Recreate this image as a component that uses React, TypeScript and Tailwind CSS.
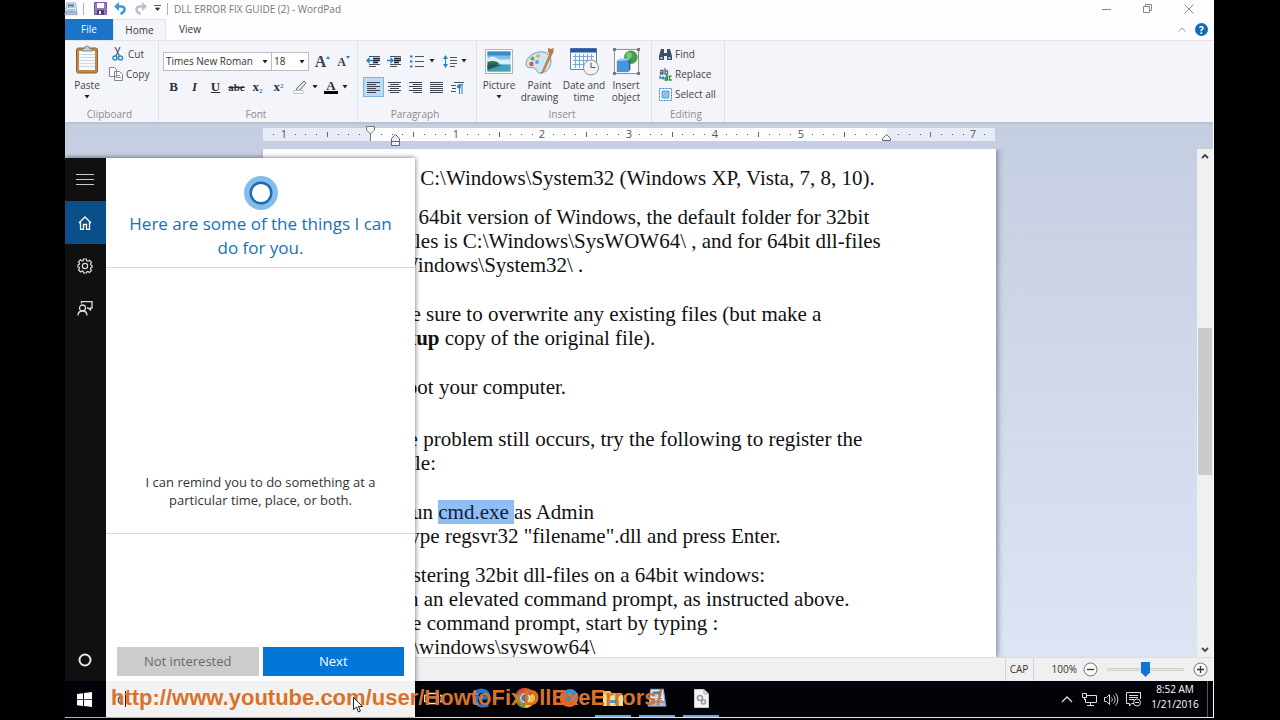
import type { ReactNode } from "react";

const Caret = () => (
  <svg width="6" height="4" viewBox="0 0 6 4" className="shrink-0">
    <path d="M.5 0h5L3 3.500z" fill="#222" />
  </svg>
);

const WordPadIcon = ({ size }: { size: number }) => (
  <svg width={size} height={size} viewBox="0 0 16 16" className="shrink-0">
    <path d="M3 1h10l1.500 10H2z" fill="#e9f2fb" stroke="#8aa5c4" strokeWidth="1" />
    <path d="M4.500 2.500h7l.5 4H4.200z" fill="#4d86c8" />
    <path d="M4.500 6.500l3-2 2 1 2.500-1 .2 2z" fill="#b8d9ef" />
    <path d="M3.500 8.500h9M3.300 10h9.400" stroke="#8ba6c4" strokeWidth=".8" />
    <path d="M1.500 11.500h13l.7 3H.8z" fill="#b5c5da" stroke="#7f95b0" strokeWidth=".8" />
  </svg>
);

/* ---------- Title bar ---------- */

function TitleBar() {
  return (
    <header className="flex h-[19px] shrink-0 items-center pb-0.5">
      <div className="flex flex-1 items-center">
        <span className="-ml-px flex w-[17px]">
          <WordPadIcon size={14} />
        </span>
        <span className="ml-0.5 h-3 w-px bg-[#b0b0b0]" />
        <button aria-label="Save" className="ml-2.5">
          <svg width="13" height="13" viewBox="0 0 13 13" className="block">
            <path d="M.5.5h12v12H.5z" fill="#9a76c0" stroke="#7b5aa3" />
            <path d="M3 1h7v5H3z" fill="#fff" />
            <path d="M3 8h7v4.500H3z" fill="#4b3f66" />
            <path d="M5 9h2v3H5z" fill="#eee" />
          </svg>
        </button>
        <button aria-label="Undo" className="ml-[7px]">
          <svg width="13" height="13" viewBox="0 0 13 13" className="block">
            <path d="M2 4.500h5.500c4 0 4.500 5-1 7.500" fill="none" stroke="#3a9bd9" strokeWidth="2.600" />
            <path d="M0 4.500L5 0v9z" fill="#3a9bd9" />
          </svg>
        </button>
        <button aria-label="Redo" className="ml-[7px]">
          <svg width="13" height="13" viewBox="0 0 13 13" className="block">
            <path d="M11 4.500H5.500c-4 0-4.500 5 1 7.500" fill="none" stroke="#b9c3cd" strokeWidth="2.600" />
            <path d="M13 4.500L8 0v9z" fill="#b9c3cd" />
          </svg>
        </button>
        <button aria-label="Customize toolbar" className="ml-[7px]">
          <svg width="7" height="7" viewBox="0 0 7 7" className="block">
            <path d="M0 .5h7M1.500 3h4L3.500 5.500z" fill="#333" stroke="#333" strokeWidth=".8" />
          </svg>
        </button>
        <span className="ml-1.5 h-3 w-px bg-[#b0b0b0]" />
        <h1 className="ml-1.5 text-[10px] leading-4 whitespace-nowrap text-[#777]">DLL ERROR FIX GUIDE (2) - WordPad</h1>
      </div>
      <div className="flex items-center">
        <button aria-label="Minimize" className="flex w-[41px] justify-center">
          <svg width="10" height="10" viewBox="0 0 10 10">
            <path d="M0 5.500h9" stroke="#888" />
          </svg>
        </button>
        <button aria-label="Restore" className="flex w-[41px] justify-center">
          <svg width="10" height="10" viewBox="0 0 10 10" fill="none" stroke="#888">
            <path d="M.5 2.500h6v6h-6zM2.500 2.500v-2h6v6h-2" />
          </svg>
        </button>
        <button aria-label="Close" className="flex w-[41px] justify-center">
          <svg width="10" height="10" viewBox="0 0 10 10">
            <path d="M.5.5l9 9M9.500.5l-9 9" stroke="#888" />
          </svg>
        </button>
        <span className="w-1" />
      </div>
    </header>
  );
}

function Tabs() {
  return (
    <nav className="flex h-[21px] shrink-0 text-[10px]">
      <button className="w-12 bg-[#1a74c7] text-white">File</button>
      <button className="w-[53px] border-x border-t border-[#dfe2e8] bg-[#f4f5fa] text-[#333]">Home</button>
      <button className="w-12 text-[#333]">View</button>
      <div className="flex flex-1 items-center justify-end gap-[9px] pr-[5px]">
        <button aria-label="Collapse ribbon">
          <svg width="8" height="5" viewBox="0 0 8 5" className="block">
            <path d="M.5 4.500L4 1l3.500 3.500" fill="none" stroke="#999" />
          </svg>
        </button>
        <button aria-label="Help" className="flex size-[13px] items-center justify-center rounded-full bg-[#0f6cb8] text-[10px] leading-none font-bold text-white">
          ?
        </button>
      </div>
    </nav>
  );
}

/* ---------- Ribbon ---------- */

function Group({ label, width, children }: { label: string; width: string; children: ReactNode }) {
  return (
    <section aria-label={label} className={`flex shrink-0 flex-col border-r border-[#dfe3ea] ${width}`}>
      <div className="flex-1">{children}</div>
      <div className="h-4 pr-1 text-center leading-4 text-[#8b8b8b]">{label}</div>
    </section>
  );
}

function Tool({ label, active, children }: { label: string; active?: boolean; children: ReactNode }) {
  return (
    <button
      aria-label={label}
      className={
        active
          ? "flex h-5 w-[21px] items-center justify-center border border-[#7fb2e5] bg-[#bcdcf6]"
          : "flex h-5 w-[21px] items-center justify-center"
      }
    >
      {children}
    </button>
  );
}

const Lines = ({ d }: { d: string }) => (
  <svg width="13" height="13" viewBox="0 0 13 13">
    <path d={d} stroke="#3c4250" strokeWidth="1" fill="none" />
  </svg>
);

const IndentIcon = ({ right }: { right?: boolean }) => (
  <svg width="15" height="13" viewBox="0 0 15 13">
    <path d="M3 1.500h11M3 9.500h11M3 11.500h7" stroke="#4a5160" />
    <path d="M7 3.500h7M7 5.500h7M7 7.500h5" stroke="#1d222c" strokeWidth="1.500" />
    <path d={right ? "M0 5.500h5" : "M2 5.500h5"} stroke="#2a80c0" strokeWidth="1.500" />
    <path d={right ? "M3.500 2l3.500 3.500L3.500 9z" : "M3.500 2L0 5.500 3.500 9z"} fill="#2a80c0" />
  </svg>
);

function BigTool({ lines, width, caret, children }: { lines: string[]; width: string; caret?: boolean; children: ReactNode }) {
  return (
    <button className={`flex flex-col items-center pt-1 leading-3 text-[#444] ${width}`}>
      <span className="flex h-[34px] items-center pb-0.5">{children}</span>
      {lines.map((line) => (
        <span key={line} className="whitespace-nowrap">
          {line}
        </span>
      ))}
      {caret && (
        <span className="flex pt-1">
          <Caret />
        </span>
      )}
    </button>
  );
}

const ClipboardIcon = () => (
  <svg width="24" height="29" viewBox="0 0 24 29">
    <rect x="1.500" y="3" width="21" height="25" rx="2" fill="#c08a45" stroke="#8e6128" />
    <path d="M4 6h16v19H4z" fill="#f7fafd" />
    <path d="M4 9.500h16M4 12.500h16M4 15.500h16M4 18.500h16M4 21.500h16" stroke="#cfd9e4" />
    <path d="M7 6V3.500h2.500a2.500 2.500 0 015 0H17V6z" fill="#c9ced5" stroke="#6b7078" strokeWidth=".8" />
  </svg>
);

const PictureIcon = () => (
  <svg width="28" height="25" viewBox="0 0 28 25">
    <path d="M.5.5h27v24H.5z" fill="#fff" stroke="#b3b3b3" />
    <path d="M2.500 2.500h23v20h-23z" fill="#7cc0ea" />
    <path d="M2.500 2.500h23v4h-23z" fill="#3a89c9" />
    <path d="M2.500 10c4-4 8-2 11 0s7-1 12 1v4h-23z" fill="#d9eff8" />
    <path d="M2.500 13c4-1 8-2 12 2l-12 3z" fill="#2f6b4d" />
    <path d="M2.500 16h23v6.500h-23z" fill="#3fa3b5" />
    <path d="M2.500 16c5-1 10-1 14 0l-14 5z" fill="#1f5a56" />
  </svg>
);

const PaintIcon = () => (
  <svg width="30" height="28" viewBox="0 0 30 28">
    <path d="M14 5c8-1 12 3 12 9 0 7-5 12-11 12-4 0-3-4-6-5s-8 1-8-4C1 11 7 6 14 5z" fill="#cfe5f4" stroke="#6d9dc4" />
    <circle cx="6.500" cy="17" r="2.200" fill="#e0533f" />
    <circle cx="7.500" cy="11.500" r="2" fill="#6fb04a" />
    <circle cx="13" cy="9" r="2" fill="#e9b53d" />
    <circle cx="12" cy="15" r="2" fill="#5aa7df" />
    <path d="M26 4L17 25l-1 2 3-3L28 5z" fill="#d98b3a" stroke="#a5622a" strokeWidth=".6" />
    <path d="M23 1l3 1 3-1-1 5-3 2-2-3z" fill="#b97b45" />
  </svg>
);

const CalendarIcon = () => (
  <svg width="30" height="29" viewBox="0 0 30 29">
    <path d="M1.500 1.500h26v21h-26z" fill="#f4f9fe" stroke="#5e87b4" />
    <path d="M1.500 1.500h26v4h-26z" fill="#2a579c" />
    <path d="M4 9.500h21M4 13.500h21M4 17.500h21M6.500 7v14M10.500 7v14M14.500 7v14M18.500 7v14M22.500 7v14" stroke="#7ea7d8" />
    <circle cx="22" cy="20.500" r="7.500" fill="#f1f3f5" stroke="#8d9298" />
    <path d="M22 15.500v5h4.500" stroke="#4c5560" fill="none" />
  </svg>
);

const ObjectIcon = () => (
  <svg width="27" height="27" viewBox="0 0 28 28">
    <path d="M1.500 1.500h25v25h-25z" fill="#fafafa" stroke="#888" />
    <path d="M0 0h3v3H0zM25 0h3v3h-3zM0 25h3v3H0zM25 25h3v3h-3z" fill="#777" />
    <circle cx="18.500" cy="9.500" r="7" fill="#3fa04a" />
    <circle cx="16.500" cy="7.500" r="3" fill="#7cc878" />
    <path d="M4 13l3-2h11l-2 2z" fill="#9ccbf5" />
    <path d="M4 13h12v12H4z" fill="#4a92e2" />
    <path d="M16 13l2-2v11l-2 3z" fill="#2460ad" />
  </svg>
);

const combo = "h-full w-full appearance-none border border-[#b9bfc9] bg-white pl-0.5 text-[#333] outline-none";

function Ribbon() {
  return (
    <div className="flex h-[82px] shrink-0 border-t border-[#e1e4ea] bg-[#f4f5fa] text-[10px] text-[#444]">
      <Group label="Clipboard" width="w-[94px]">
        <div className="flex">
          <button className="flex w-11 flex-col items-center pt-1 leading-3">
            <ClipboardIcon />
            <span className="pt-[5px]">Paste</span>
            <span className="flex pt-1">
              <Caret />
            </span>
          </button>
          <div className="flex flex-col pt-[3px]">
            <button className="flex h-5 items-center gap-1 pl-[3px]">
              <svg width="12" height="14" viewBox="0 0 12 14">
                <path d="M3 0l4.500 9M8 0L4 9" stroke="#5b6878" strokeWidth="1.300" />
                <circle cx="3" cy="11" r="2" fill="none" stroke="#2e86c8" strokeWidth="1.500" />
                <circle cx="8.500" cy="11" r="2" fill="none" stroke="#2e86c8" strokeWidth="1.500" />
              </svg>
              Cut
            </button>
            <button className="flex h-5 items-center gap-[3px]">
              <svg width="14" height="14" viewBox="0 0 14 14" fill="#fff" stroke="#7c8794">
                <path d="M.5.500h5l2 2v7h-7zM5.500 4.500h5l3 3v6h-8z" />
                <path d="M7 8.500h4M7 10.500h5" stroke="#6aa2d4" />
              </svg>
              Copy
            </button>
          </div>
        </div>
      </Group>

      <Group label="Font" width="w-[199px]">
        <div className="mt-[11px] flex h-[19px] pl-1">
          <div className="relative w-[109px]">
            <select aria-label="Font family" className={combo}>
              <option>Times New Roman</option>
            </select>
            <span className="pointer-events-none absolute top-2 right-1 flex">
              <Caret />
            </span>
          </div>
          <div className="relative -ml-px w-[38px]">
            <select aria-label="Font size" className={combo}>
              <option>18</option>
            </select>
            <span className="pointer-events-none absolute top-2 right-1 flex">
              <Caret />
            </span>
          </div>
          <div className="flex items-center pl-[3px] font-['Liberation_Serif',serif] font-bold text-[#3a4150]">
            <Tool label="Grow font">
              <span className="text-base">A</span>
              <svg width="4" height="12" viewBox="0 0 4 12">
                <path d="M0 3l2-3 2 3z" fill="#2a80c0" />
              </svg>
            </Tool>
            <Tool label="Shrink font">
              <span className="text-xs">A</span>
              <svg width="4" height="12" viewBox="0 0 4 12">
                <path d="M0 0h4L2 3z" fill="#2a80c0" />
              </svg>
            </Tool>
          </div>
        </div>
        <div className="mt-1.5 flex items-center pl-1 font-['Liberation_Serif',serif] text-[13px] font-bold text-[#2c313c]">
          <Tool label="Bold">B</Tool>
          <Tool label="Italic">
            <i>I</i>
          </Tool>
          <Tool label="Underline">
            <u>U</u>
          </Tool>
          <Tool label="Strikethrough">
            <s className="text-[11px]">abc</s>
          </Tool>
          <Tool label="Subscript">
            <span>
              x<sub className="text-[7px] text-[#2a80c0]">2</sub>
            </span>
          </Tool>
          <Tool label="Superscript">
            <span>
              x<sup className="text-[7px] text-[#2a80c0]">2</sup>
            </span>
          </Tool>
          <button aria-label="Text highlight color" className="flex h-5 w-[33px] items-center justify-center gap-1">
            <svg width="15" height="14" viewBox="0 0 15 14">
              <path d="M4 8l7-7 2 2-6 7-4 1z" fill="#dfe5ec" stroke="#66707e" />
              <path d="M1 10.500h9v3H1z" fill="#fff" stroke="#aaa" strokeWidth=".7" />
            </svg>
            <Caret />
          </button>
          <button aria-label="Text color" className="flex h-5 w-7 items-center justify-center gap-1">
            <span className="border-b-[3px] border-black px-0.5 leading-[11px]">A</span>
            <Caret />
          </button>
        </div>
      </Group>

      <Group label="Paragraph" width="w-[119px]">
        <div className="mt-2.5 flex items-center pl-[5px]">
          <Tool label="Decrease indent">
            <IndentIcon />
          </Tool>
          <Tool label="Increase indent">
            <IndentIcon right />
          </Tool>
          <button aria-label="Start a list" className="flex h-5 w-[34px] items-center justify-center gap-[5px]">
            <svg width="14" height="13" viewBox="0 0 14 13">
              <path d="M0 1.500h2.500M0 6.500h2.500M0 11.500h2.500" stroke="#2a80c0" strokeWidth="2" />
              <path d="M5 1.500h9M5 6.500h9M5 11.500h9" stroke="#4a5160" />
            </svg>
            <Caret />
          </button>
          <button aria-label="Line spacing" className="flex h-5 w-7 items-center justify-center gap-1 pl-1">
            <svg width="14" height="13" viewBox="0 0 14 13" className="shrink-0">
              <path d="M2.500 2v9" stroke="#2a80c0" />
              <path d="M0 4l2.500-4L5 4zM0 9l2.500 4L5 9z" fill="#2a80c0" />
              <path d="M7 2.500h7M7 5.500h7M7 8.500h7M7 11.500h5" stroke="#4a5160" />
            </svg>
            <Caret />
          </button>
        </div>
        <div className="mt-1.5 flex items-center pl-[5px]">
          <Tool label="Align left" active>
            <Lines d="M0 1.500h13M0 3.500h9M0 5.500h13M0 7.500h9M0 9.500h13M0 11.500h9" />
          </Tool>
          <Tool label="Center">
            <Lines d="M0 1.500h13M2 3.500h9M0 5.500h13M2 7.500h9M0 9.500h13M2 11.500h9" />
          </Tool>
          <Tool label="Align right">
            <Lines d="M0 1.500h13M4 3.500h9M0 5.500h13M4 7.500h9M0 9.500h13M4 11.500h9" />
          </Tool>
          <Tool label="Justify">
            <Lines d="M0 1.500h13M0 3.500h13M0 5.500h13M0 7.500h13M0 9.500h13M0 11.500h13" />
          </Tool>
          <Tool label="Paragraph">
            <svg width="13" height="13" viewBox="0 0 13 13">
              <path d="M3 1.500h10M0 4.500h5M1 7.500h4M0 10.500h5" stroke="#4a5160" />
              <path d="M8.500 3v10M11 3v10M12 3.500H8" stroke="#2a80c0" />
              <circle cx="8" cy="5.500" r="2" fill="#2a80c0" />
            </svg>
          </Tool>
        </div>
      </Group>

      <Group label="Insert" width="w-[175px]">
        <div className="flex pl-[3px]">
          <BigTool lines={["Picture"]} width="w-[38px]" caret>
            <PictureIcon />
          </BigTool>
          <BigTool lines={["Paint", "drawing"]} width="w-[43px]">
            <PaintIcon />
          </BigTool>
          <BigTool lines={["Date and", "time"]} width="w-[46px]">
            <CalendarIcon />
          </BigTool>
          <BigTool lines={["Insert", "object"]} width="w-[38px]">
            <ObjectIcon />
          </BigTool>
        </div>
      </Group>

      <Group label="Editing" width="w-[73px]">
        <div className="flex flex-col pt-[3px] pl-[7px]">
          <button className="flex h-5 items-center gap-[3px]">
            <svg width="13" height="12" viewBox="0 0 13 12">
              <path d="M2 1h3v4h3V1h3l2 7v4H8V8H5v4H0V8z" fill="#3f4f66" />
              <path d="M1.500 9h2v2h-2zM9.500 9h2v2h-2z" fill="#b9d2ea" />
            </svg>
            Find
          </button>
          <button className="flex h-5 items-center gap-[3px]">
            <svg width="13" height="13" viewBox="0 0 13 13">
              <g fill="none" strokeWidth="1.300">
                <path d="M1 2.500h3V6H1.500V4.300H4M6 0v6h2.500V3H6" stroke="#5f6873" />
                <path d="M6.500 8h2v4H6.200v-2h2.300M12.800 8.200h-2.300v3.800h2.300" stroke="#2f8a3c" />
                <path d="M1 7.500v2.500h4" stroke="#2a80c0" />
              </g>
              <path d="M3.500 7.800l2.500 2.200-2.500 2.200z" fill="#2a80c0" />
            </svg>
            Replace
          </button>
          <button className="flex h-5 items-center gap-[3px] whitespace-nowrap">
            <svg width="13" height="13" viewBox="0 0 13 13">
              <path d="M.5.500h12v12H.5z" fill="#fff" stroke="#3b7fc0" strokeDasharray="2 1" />
              <path d="M3 3h7v7H3z" fill="#8cc3ee" stroke="#5b9ed4" />
            </svg>
            Select all
          </button>
        </div>
      </Group>
    </div>
  );
}

/* ---------- Ruler and document ---------- */

const RULER_ORIGIN = 107;
const INCH = 86.2;

function Ruler() {
  const marks: ReactNode[] = [];
  for (let eighth = -9; eighth <= 57; eighth++) {
    const x = Math.round(RULER_ORIGIN + (eighth * INCH) / 8);
    if (eighth % 8 === 0) {
      const inch = Math.abs(eighth / 8);
      if (inch !== 0 && inch !== 6) {
        marks.push(
          <text key={eighth} x={x} y="10" textAnchor="middle" fontSize="11" fill="#555">
            {inch}
          </text>,
        );
      }
    } else if (eighth % 4 === 0) {
      marks.push(<path key={eighth} d={`M${x + 0.5} 4v5`} stroke="#666" />);
    } else {
      marks.push(<path key={eighth} d={`M${x} 6.500h1`} stroke="#555" />);
    }
  }
  return (
    <svg width="732" height="25" viewBox="0 -4 732 25" className="block shrink-0" role="img" aria-label="Ruler">
      <path d="M0 0h732v13H0z" fill="#e6ebf5" />
      <path d="M107 0h517v13H107z" fill="#fdfdff" />
      {marks}
      <path d="M107.500 5v8" stroke="#777" />
      <path d="M103.500-1.500h8v3.500l-4 4-4-4z" fill="#f5f5f5" stroke="#777" />
      <path d="M128.500 13.500v-3l4-4 4 4v3zM128.500 13.500h8v4h-8z" fill="#eef" stroke="#666" />
      <path d="M619.500 12.500v-2l4-4 4 4v2z" fill="#f5f5f5" stroke="#666" />
    </svg>
  );
}

function DocumentPage() {
  return (
    <article className="h-full w-[733px] shrink-0 overflow-hidden bg-white pt-[17px] pl-[110px] font-['Liberation_Serif',serif] text-[21px] leading-6 whitespace-nowrap text-[#111] shadow-[2px_0_5px_rgba(60,70,100,0.5)]">
      <p>path: C:\Windows\System32 (Windows XP, Vista, 7, 8, 10).</p>
      <p className="mt-[15px]">
        On a 64bit version of Windows, the default folder for 32bit
        <br />
        dll-files is C:\Windows\SysWOW64\ , and for 64bit dll-files
        <br />
        C:\Windows\System32\ .
      </p>
      <p className="mt-[25px]">
        Make sure to overwrite any existing files (but make a
        <br />
        <b>backup</b> copy of the original file).
      </p>
      <p className="mt-[25px]">Reboot your computer.</p>
      <p className="mt-7">
        If the problem still occurs, try the following to register the
        <br />
        dll-file:
      </p>
      <ul className="mt-[25px] pl-[25px]">
        <li>
          Run <mark className="bg-[#8fbef5] text-[#10203c]">cmd.exe </mark>as Admin
        </li>
        <li>Type regsvr32 "filename".dll and press Enter.</li>
      </ul>
      <p className="mt-[15px]">
        Registering 32bit dll-files on a 64bit windows:
        <br />
        From an elevated command prompt, as instructed above.
        <br />
        In the command prompt, start by typing :
        <br />
        cd c:\windows\syswow64\
      </p>
    </article>
  );
}

function ScrollBar() {
  return (
    <div className="flex w-4 shrink-0 flex-col items-center justify-between bg-[#f0f0f2] py-1">
      <svg width="8" height="6" viewBox="0 0 8 6">
        <path d="M1 5l3-3 3 3" fill="none" stroke="#444" strokeWidth="1.800" />
      </svg>
      <div className="flex w-full flex-1 flex-col">
        <span className="grow-[169]" />
        <span className="mx-px grow-[148] bg-[#cacbcb]" />
        <span className="grow-[172]" />
      </div>
      <svg width="8" height="6" viewBox="0 0 8 6">
        <path d="M1 1l3 3 3-3" fill="none" stroke="#444" strokeWidth="1.800" />
      </svg>
    </div>
  );
}

function Workspace() {
  return (
    <main className="flex min-h-0 flex-1 flex-col border-t-2 border-[#b9c3d8] bg-linear-to-b from-[#c5cde0] to-[#dde4f4]">
      <div className="flex h-[25px] shrink-0 items-start pl-[198px]">
        <Ruler />
      </div>
      <div className="flex min-h-0 flex-1 justify-between">
        <div className="flex min-w-0 overflow-hidden pr-3 pl-[198px]">
          <DocumentPage />
        </div>
        <ScrollBar />
      </div>
    </main>
  );
}

function StatusBar() {
  return (
    <footer className="flex h-6 shrink-0 items-center justify-end border-t border-[#dcdcdc] bg-[#f0f0f0] pr-[5px] text-[10px] text-[#333]">
      <span className="flex h-full w-[29px] items-center justify-center border-x border-[#d5d5d5]">CAP</span>
      <label htmlFor="zoom" className="ml-[18px]">
        100%
      </label>
      <button aria-label="Zoom out" className="ml-1.5 flex">
        <svg width="15" height="15" viewBox="0 0 15 15">
          <circle cx="7.500" cy="7.500" r="6.500" fill="#fafafa" stroke="#777" />
          <path d="M4 7.500h7" stroke="#333" strokeWidth="1.300" />
        </svg>
      </button>
      <input
        id="zoom"
        type="range"
        defaultValue={50}
        className="mx-[9px] h-4 w-[77px] appearance-none bg-transparent [&::-webkit-slider-runnable-track]:h-[3px] [&::-webkit-slider-runnable-track]:border [&::-webkit-slider-runnable-track]:border-[#d2d2d2] [&::-webkit-slider-runnable-track]:bg-[#e6e6e6] [&::-webkit-slider-thumb]:-mt-[7px] [&::-webkit-slider-thumb]:h-[15px] [&::-webkit-slider-thumb]:w-[9px] [&::-webkit-slider-thumb]:appearance-none [&::-webkit-slider-thumb]:bg-[#0f74d4] [&::-webkit-slider-thumb]:[clip-path:polygon(0_0,100%_0,100%_70%,50%_100%,0_70%)]"
      />
      <button aria-label="Zoom in" className="flex">
        <svg width="15" height="15" viewBox="0 0 15 15">
          <circle cx="7.500" cy="7.500" r="6.500" fill="#fafafa" stroke="#777" />
          <path d="M4 7.500h7M7.500 4v7" stroke="#333" strokeWidth="1.300" />
        </svg>
      </button>
    </footer>
  );
}

/* ---------- Taskbar ---------- */

function TaskButton({ label, running, children }: { label: string; running?: boolean; children: ReactNode }) {
  return (
    <button aria-label={label} className="flex h-full w-11 flex-col items-center">
      <span className="flex flex-1 items-center">{children}</span>
      <span className={running ? "h-0.5 w-9 bg-[#76a3d8]" : "h-0.5 w-9"} />
    </button>
  );
}

function Taskbar() {
  return (
    <div className="flex h-9 shrink-0 items-stretch bg-[#020308] text-white">
      <div className="flex flex-1 pl-[346px]">
        <TaskButton label="Task view">
          <svg width="18" height="13" viewBox="0 0 18 13" fill="none" stroke="#e8e8e8" strokeWidth="1.300">
            <path d="M4 1.500h10v10H4zM2 3.500H.7v6H2M16 3.500h1.300v6H16" />
          </svg>
        </TaskButton>
        <span className="w-1" />
        <TaskButton label="Edge">
          <svg width="20" height="20" viewBox="0 0 20 20">
            <path d="M1 10C1 4 5 .5 10.500.5 16 .5 19 4 19 9v2.500H7c0 6 6 6 10.500 3.500v3.500C10 21 3.500 19 3.500 12c0-3 1.500-5 4-6.500C4 6 2 8 1 10zm6.500-2h6c0-4-5.500-4-6 0z" fill="#1f78d1" />
          </svg>
        </TaskButton>
        <TaskButton label="Chrome">
          <svg width="20" height="20" viewBox="0 0 20 20">
            <path d="M10 10L1.300 5A10 10 0 0118.700 5z" fill="#e04a3a" />
            <path d="M10 10l8.700-5A10 10 0 0110 20z" fill="#f4c430" />
            <path d="M10 10v10A10 10 0 011.300 5z" fill="#3fa450" />
            <circle cx="10" cy="10" r="4.800" fill="#fff" />
            <circle cx="10" cy="10" r="3.800" fill="#3f7fe0" />
          </svg>
        </TaskButton>
        <TaskButton label="Firefox">
          <svg width="20" height="20" viewBox="0 0 20 20">
            <circle cx="11" cy="9" r="8" fill="#3b8fd0" />
            <path d="M3 3c-3 5-3 10 0 13 5 5 14 4 16-4 1-3 0-6-1-7 0 5-2 9-6 9s-6-2-5-5l3-1-3-2c-2 0-3-1-4-3z" fill="#e8622c" />
          </svg>
        </TaskButton>
        <TaskButton label="File Explorer" running>
          <svg width="20" height="17" viewBox="0 0 20 17">
            <path d="M0 1h7l2 2h10v13H0z" fill="#e8c25a" />
            <path d="M0 5h20v11H0z" fill="#f8df8e" />
            <path d="M4 10h12v6h-3v-3H7v3H4z" fill="#3fa0d8" />
          </svg>
        </TaskButton>
        <TaskButton label="WordPad" running>
          <WordPadIcon size={20} />
        </TaskButton>
        <TaskButton label="Configuration file" running>
          <svg width="15" height="19" viewBox="0 0 15 19">
            <path d="M.5.500h9.500l4.500 4.500v13.500H.5z" fill="#f4f4f4" stroke="#ccc" />
            <path d="M10 .5V5h4.500" fill="none" stroke="#aaa" />
            <circle cx="6" cy="9" r="2.500" fill="none" stroke="#9a9a9a" strokeWidth="1.600" />
            <circle cx="9.500" cy="13" r="2" fill="none" stroke="#9a9a9a" strokeWidth="1.600" />
          </svg>
        </TaskButton>
      </div>
      <div className="flex items-center gap-[7px]">
        <button aria-label="Show hidden icons">
          <svg width="12" height="7" viewBox="0 0 12 7" className="block">
            <path d="M1 6l5-5 5 5" fill="none" stroke="#ddd" strokeWidth="1.300" />
          </svg>
        </button>
        <button aria-label="Network" className="ml-0.5">
          <svg width="15" height="13" viewBox="0 0 15 13" fill="none" stroke="#ddd" className="block">
            <path d="M5 2.500h9.500v7h-11V6M8.500 9.500v3M5 12.500h7M.5.500h4v4h-4zM2.500 4.500V7" />
          </svg>
        </button>
        <button aria-label="Volume">
          <svg width="15" height="13" viewBox="0 0 15 13" fill="none" stroke="#ddd" className="block">
            <path d="M.5 4.500h2l3-3v10l-3-3h-2zM7.500 4.500c1 1 1 3 0 4M9.500 2.500c2 2 2 6 0 8M11.500.5c3 3 3 9 0 12" />
          </svg>
        </button>
        <button aria-label="Notifications">
          <svg width="15" height="15" viewBox="0 0 15 15" fill="none" stroke="#ddd" className="block">
            <path d="M8 11.500H5.500L3.500 14v-2.500H.5V.5h14V7M3 3.500h9M3 5.500h9M3 7.500h5" />
            <circle cx="11" cy="10.500" r="3.500" />
            <path d="M9 10.500h4" />
          </svg>
        </button>
      </div>
      <div className="ml-2 flex w-[52px] flex-col justify-center pb-1 text-center text-[10px] leading-[15px] whitespace-nowrap">
        <span>8:52 AM</span>
        <span>1/21/2016</span>
      </div>
      <button aria-label="Show desktop" className="ml-1.5 w-1.5 border-l border-[#555]" />
    </div>
  );
}

/* ---------- Cortana ---------- */

const railItem = "flex h-[43px] items-center justify-center pr-0.5";

function CortanaPanel() {
  return (
    <aside className="absolute top-[158px] bottom-0 left-0 flex w-[350px] text-[#333] shadow-[0_0_5px_rgba(0,0,0,0.6)]">
      <nav className="flex w-[41px] shrink-0 flex-col bg-[#101010]">
        <button aria-label="Menu" className={railItem}>
          <svg width="18" height="11" viewBox="0 0 18 11">
            <path d="M0 .5h18M0 5.500h18M0 10.500h18" stroke="#ccc" />
          </svg>
        </button>
        <button aria-label="Home" className={`${railItem} bg-[#0a4f8a]`}>
          <svg width="14" height="14" viewBox="0 0 14 14" fill="none" stroke="#fff" strokeWidth="1.300">
            <path d="M1 7l6-6 6 6M2.500 6v7.300H5.500V8.500h3v4.800h3V6" />
          </svg>
        </button>
        <button aria-label="Settings" className={railItem}>
          <svg width="16" height="16" viewBox="0 0 16 16" fill="none" stroke="#ddd" strokeWidth="1.200">
            <path d="M6.600 1h2.800l.3 1.900 1.200.5 1.600-1.100 2 2-1.100 1.600.5 1.200 1.100.3v2l-1.100.3-.5 1.200 1.100 1.600-2 2-1.600-1.100-1.200.5L9.400 15H6.600l-.3-1.600-1.200-.5-1.600 1.100-2-2 1.100-1.600-.5-1.200L1 9V7l1.100-.3.5-1.200-1.100-1.600 2-2 1.600 1.100 1.200-.5z" />
            <circle cx="8" cy="8" r="2.600" />
          </svg>
        </button>
        <button aria-label="Feedback" className={railItem}>
          <svg width="16" height="15" viewBox="0 0 16 15" fill="none" stroke="#ddd" strokeWidth="1.300">
            <circle cx="5.500" cy="7" r="3" />
            <path d="M1 14.500c0-6 9-6 9 0M4.500 2.500v-2h10.500v6.500h-1.500v2l-2.500-2h-1" />
          </svg>
        </button>
        <span className="flex-1" />
        <button aria-label="Cortana" className={railItem}>
          <svg width="14" height="14" viewBox="0 0 14 14">
            <circle cx="7" cy="7" r="5.500" fill="none" stroke="#e6e6e6" strokeWidth="2" />
          </svg>
        </button>
        <button aria-label="Start" className="flex h-9 items-center justify-center bg-[#020308] pr-0.5">
          <svg width="15" height="15" viewBox="0 0 15 15" fill="#fff">
            <path d="M0 2l6-.8v6H0zM7 1l8-1v7.200H7zM0 8h6v6l-6-.8zM7 8h8v7l-8-1z" />
          </svg>
        </button>
      </nav>
      <div className="flex flex-1 flex-col bg-white text-center">
        <div className="flex h-[110px] flex-col items-center border-b border-[#d8d8d8] pt-[18px]">
          <svg width="34" height="34" viewBox="0 0 34 34">
            <circle cx="17" cy="17" r="17" fill="#85bdea" />
            <circle cx="17" cy="17" r="10.300" fill="#fff" stroke="#1d6db5" strokeWidth="2.400" />
          </svg>
          <h2 className="pt-0.5 text-[17px] leading-6 whitespace-nowrap text-[#1272ba]">
            Here are some of the things I can
            <br />
            do for you.
          </h2>
        </div>
        <div className="flex flex-1 flex-col justify-end border-b border-[#d8d8d8] pb-6 text-[13px] leading-[18px] whitespace-nowrap">
          <p>
            I can remind you to do something at a
            <br />
            particular time, place, or both.
          </p>
        </div>
        <div className="flex h-[147px] items-end gap-1 px-[11px] pb-[5px] text-[13px]">
          <button className="h-[29px] flex-1 bg-[#cccccc] text-[#6a6a6a]">Not interested</button>
          <button className="h-[29px] flex-1 bg-[#0277d8] text-white">Next</button>
        </div>
        <label className="flex h-9 items-center bg-[#f2f2f2] pl-[11px]">
          <input aria-label="Search" defaultValue="c" className="w-2 bg-transparent text-sm text-[#333] outline-none" />
          <span className="h-4 w-px bg-[#222]" />
        </label>
      </div>
    </aside>
  );
}

export default function App() {
  return (
    <div className="flex h-screen justify-center overflow-hidden bg-black pr-[66px] pb-0.5 pl-[65px] font-['Open_Sans','Noto_Sans',sans-serif]">
      <div className="relative flex min-w-0 flex-1 flex-col border-b border-[#e8e8e8]">
        <div className="flex min-h-0 flex-1 flex-col border-r border-white bg-[#fdfdff]">
          <TitleBar />
          <Tabs />
          <Ribbon />
          <Workspace />
          <StatusBar />
          <Taskbar />
        </div>
        <CortanaPanel />
        <a
          href="http://www.youtube.com/user/HowtoFixDllExeErrors/"
          className="absolute bottom-[5px] left-[46px] font-['Liberation_Sans',sans-serif] text-[22px] leading-7 font-bold whitespace-nowrap text-[#d9722a]"
        >
          http://www.youtube.com/user/HowtoFixDllExeErrors/
        </a>
        <svg width="11" height="16" viewBox="0 0 11 16" className="absolute bottom-1 left-[288px]">
          <path d="M.5.500v12l3-2.500 2 5 2-1-2-4.500h4z" fill="#fff" stroke="#222" />
        </svg>
      </div>
    </div>
  );
}
